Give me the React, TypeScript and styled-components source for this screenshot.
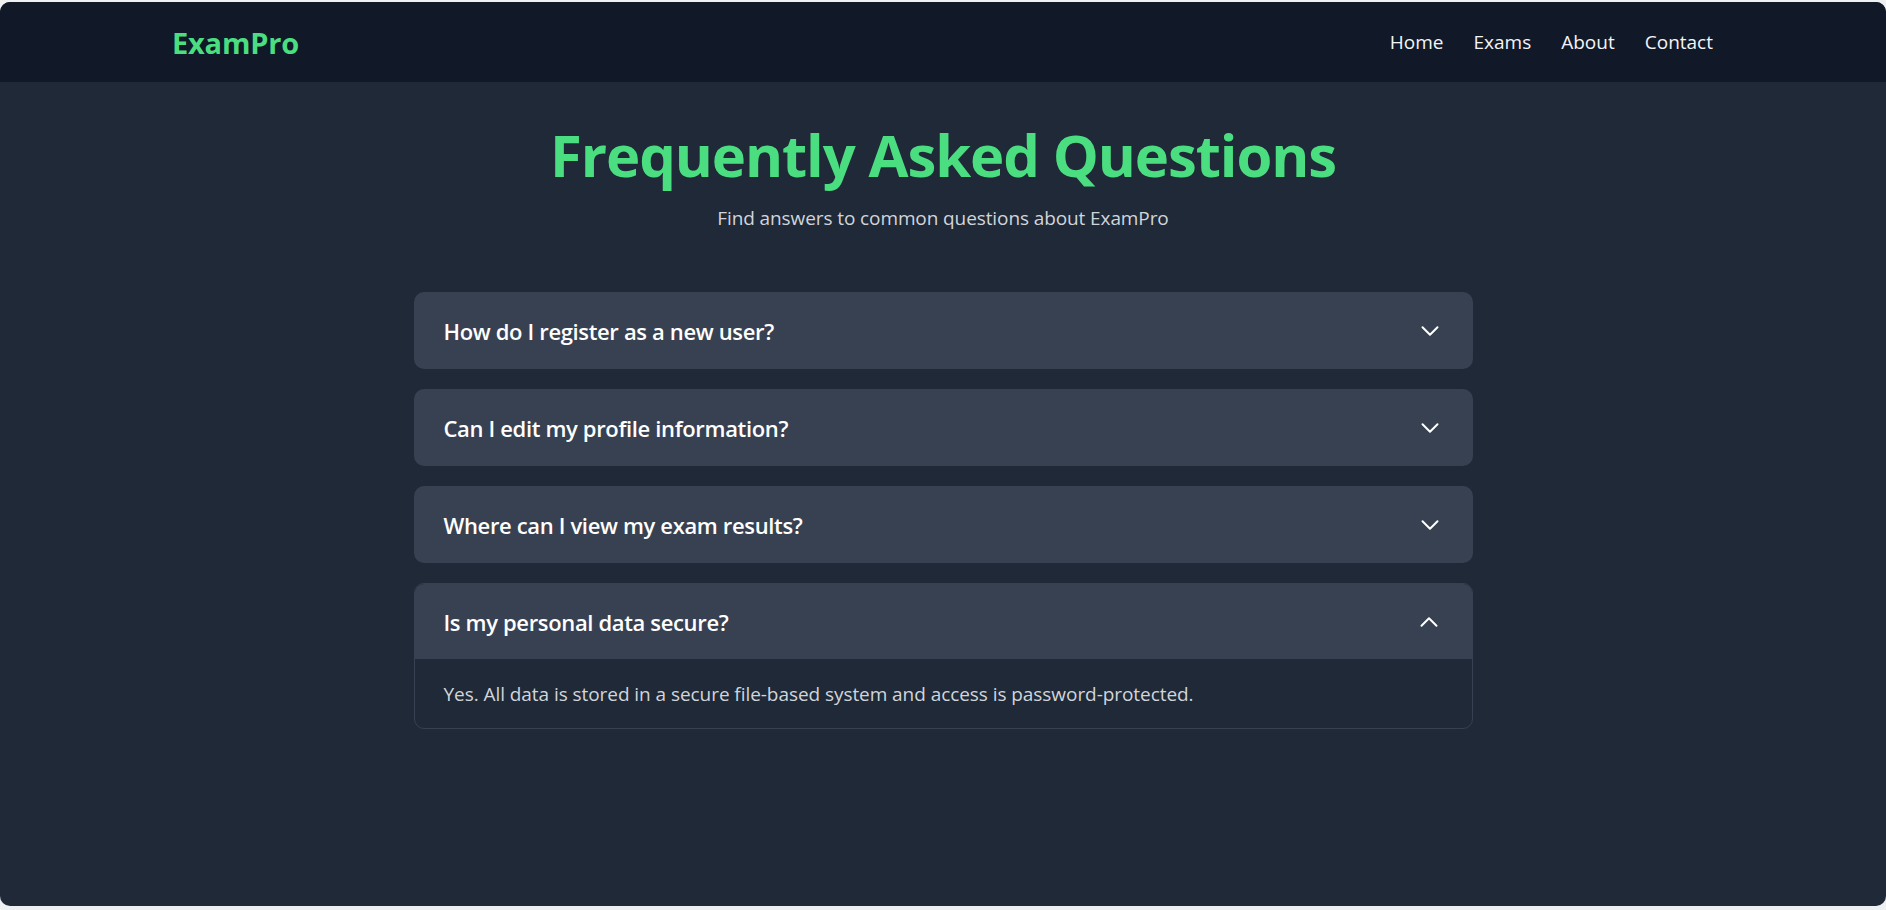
import React, { useState } from "react";
import styled, { createGlobalStyle } from "styled-components";

const GlobalStyle = createGlobalStyle`
  html, body {
    margin: 0;
    padding: 0;
    background: #eef0f2;
  }
  body {
    font-family: "Open Sans", "Noto Sans", Arial, sans-serif;
    -webkit-font-smoothing: antialiased;
  }
  * { box-sizing: border-box; }
`;

const Frame = styled.div`
  margin-top: 2px;
  height: 904px;
  border-radius: 10px;
  overflow: hidden;
  background: #1f2937;
  display: flex;
  flex-direction: column;
`;

const NavBar = styled.nav`
  height: 80px;
  background: #111827;
  display: flex;
  align-items: center;
  justify-content: space-between;
  padding: 0 173px 0 172px;
  flex-shrink: 0;
`;

const Logo = styled.a`
  font-size: 29px;
  font-weight: 700;
  color: #4ade80;
  text-decoration: none;
  letter-spacing: -0.2px;
`;

const NavLinks = styled.div`
  display: flex;
  align-items: center;
  gap: 30px;
`;

const NavLink = styled.a`
  font-size: 19px;
  color: #f3f4f6;
  text-decoration: none;
  letter-spacing: 0;
`;

const Main = styled.main`
  display: flex;
  flex-direction: column;
  align-items: center;
  padding-top: 44px;
`;

const Title = styled.h1`
  margin: 0;
  font-size: 58px;
  line-height: 1;
  font-weight: 700;
  color: #4ade80;
  letter-spacing: -1.1px;
`;

const Subtitle = styled.p`
  margin: 20px 0 0;
  font-size: 19px;
  line-height: 28px;
  color: #d1d5db;
  letter-spacing: -0.1px;
`;

const List = styled.div`
  width: 100%;
  max-width: 1059px;
  margin-top: 60px;
  display: flex;
  flex-direction: column;
  gap: 20px;
`;

const Item = styled.div<{ $open: boolean }>`
  border-radius: 10px;
  overflow: hidden;
  background: #1f2937;
  border: ${(p) => (p.$open ? "1px solid #374151" : "none")};
`;

const Question = styled.button<{ $open: boolean }>`
  width: 100%;
  height: ${(p) => (p.$open ? "75px" : "77px")};
  display: flex;
  align-items: center;
  justify-content: space-between;
  padding: 0 31px 0 ${(p) => (p.$open ? "29px" : "30px")};
  background: #374151;
  border: none;
  cursor: pointer;
  font-family: inherit;
  font-size: 22px;
  font-weight: 600;
  color: #ffffff;
  text-align: left;
  letter-spacing: -0.35px;
`;

const Chevron = styled.svg<{ $open: boolean }>`
  width: 24px;
  height: 24px;
  flex-shrink: 0;
  transform: ${(p) => (p.$open ? "rotate(180deg)" : "none")};
`;

const Answer = styled.div`
  padding: 21px 29px 20px;
  font-size: 19px;
  line-height: 28px;
  color: #d1d5db;
  letter-spacing: -0.06px;
`;

const faqs = [
  {
    q: "How do I register as a new user?",
    a: "Click the Register link and fill out the form with your details to create an account.",
  },
  {
    q: "Can I edit my profile information?",
    a: "Yes. Go to your profile page to update your personal information at any time.",
  },
  {
    q: "Where can I view my exam results?",
    a: "Your exam results are available on your dashboard after you complete an exam.",
  },
  {
    q: "Is my personal data secure?",
    a: "Yes. All data is stored in a secure file-based system and access is password-protected.",
  },
];

export default function App() {
  const [open, setOpen] = useState<number | null>(3);
  return (
    <>
      <GlobalStyle />
      <Frame>
        <NavBar>
          <Logo href="#">ExamPro</Logo>
          <NavLinks>
            <NavLink href="#">Home</NavLink>
            <NavLink href="#">Exams</NavLink>
            <NavLink href="#">About</NavLink>
            <NavLink href="#">Contact</NavLink>
          </NavLinks>
        </NavBar>
        <Main>
          <Title>Frequently Asked Questions</Title>
          <Subtitle>Find answers to common questions about ExamPro</Subtitle>
          <List>
            {faqs.map((f, i) => {
              const isOpen = open === i;
              return (
                <Item key={i} $open={isOpen}>
                  <Question $open={isOpen} onClick={() => setOpen(isOpen ? null : i)}>
                    <span>{f.q}</span>
                    <Chevron
                      $open={isOpen}
                      viewBox="0 0 24 24"
                      fill="none"
                      stroke="#ffffff"
                      strokeWidth={2}
                      strokeLinecap="round"
                      strokeLinejoin="round"
                    >
                      <path d="m19.5 8.25-7.5 7.5-7.5-7.5" />
                    </Chevron>
                  </Question>
                  {isOpen && <Answer>{f.a}</Answer>}
                </Item>
              );
            })}
          </List>
        </Main>
      </Frame>
    </>
  );
}
